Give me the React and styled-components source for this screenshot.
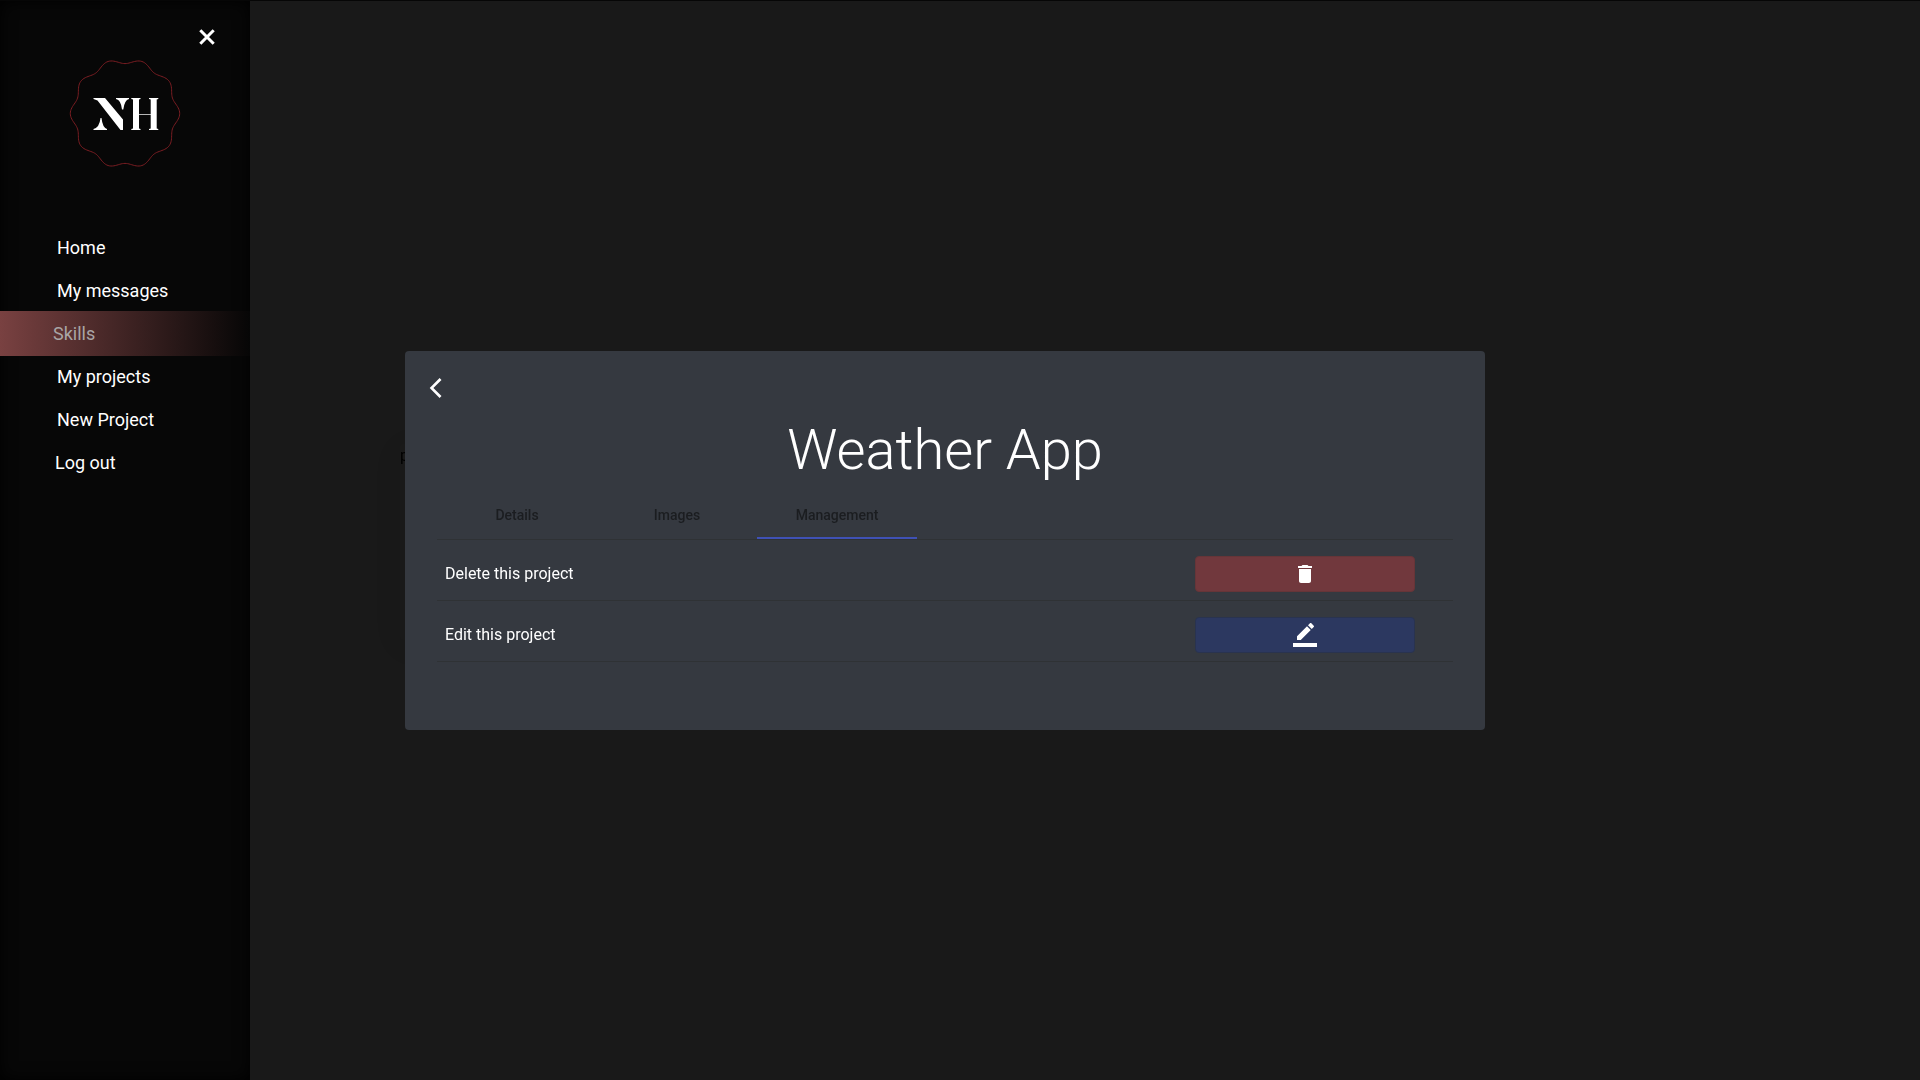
import React from "react";
import styled, { createGlobalStyle } from "styled-components";

const GlobalStyle = createGlobalStyle`
  *, *::before, *::after { box-sizing: border-box; }
  body {
    margin: 0;
    background: #191919;
    color: #fff;
    font-family: Roboto, "Liberation Sans", sans-serif;
    font-size: 16px;
    line-height: 24px;
  }
  button { font: inherit; color: inherit; cursor: pointer; }
`;

const Page = styled.div`
  display: flex;
  min-height: 100vh;
  border-top: 1px solid #060606;
`;

const Sidebar = styled.aside`
  display: flex;
  flex-direction: column;
  width: 250px;
  flex: none;
  background: #070707;
  box-shadow: inset 0 0 16px #000;
`;

const CloseButton = styled.button`
  display: flex;
  align-self: flex-end;
  margin: 24px 31px 0 0;
  padding: 0;
  border: 0;
  background: none;
`;

const LogoLink = styled.a`
  align-self: center;
  display: flex;
  margin: 9px 0 56px;
`;

const Nav = styled.nav`
  display: flex;
  flex-direction: column;
`;

const NavLink = styled.a`
  padding: 0 0 0 ${(p) => p.$indent || 57}px;
  height: 43px;
  font-size: 18px;
  line-height: 43px;
  text-decoration: none;
  color: #fff;
  ${(p) =>
    p.$active &&
    `
    height: 45px;
    line-height: 45px;
    margin: -1px 0;
    color: #a9a5a5;
    background: linear-gradient(to right, #794141, #060606);
  `}
`;

const Main = styled.main`
  flex: 1;
  min-width: 0;
`;

const Overlay = styled.div`
  position: fixed;
  inset: 0;
  display: flex;
  align-items: center;
  justify-content: center;
  padding: 1px 30px 0 0;
  pointer-events: none;
`;

const Dialog = styled.section`
  position: relative;
  width: 100%;
  max-width: 1080px;
  padding: 25px 32px 68px;
  border-radius: 4px;
  background: #353940;
  pointer-events: auto;
`;

const Behind = styled.div`
  position: absolute;
  z-index: -1;
  left: -5px;
  top: 93px;
  width: 240px;
  height: 196px;
  border-radius: 4px;
  color: #000;
  box-shadow: 0 5px 32px rgba(0, 0, 0, 0.06);
`;

const BackButton = styled.button`
  display: flex;
  margin-left: -13px;
  padding: 0;
  border: 0;
  background: none;
`;

const Title = styled.h1`
  margin: 18px 0 8px;
  font-size: 56px;
  line-height: 64px;
  font-weight: 300;
  text-align: center;
`;

const Tabs = styled.div`
  display: flex;
  border-bottom: 1px solid #2f3235;
`;

const Tab = styled.button`
  width: 160px;
  height: 49px;
  padding: 3px 0 0;
  border: 0;
  border-bottom: 2px solid ${(p) => (p.$active ? "#3f51b5" : "transparent")};
  background: none;
  color: #1b1d20;
  font-size: 14px;
  font-weight: 500;
`;

const Row = styled.div`
  display: flex;
  align-items: center;
  justify-content: space-between;
  height: 61px;
  padding: 8px 38px 0 8px;
  border-bottom: 1px solid #2f3235;
`;

const ActionButton = styled.button`
  display: flex;
  align-items: center;
  justify-content: center;
  width: 220px;
  height: 36px;
  padding: 0;
  border: 1px solid ${(p) => (p.$danger ? "#663538" : "#29334f")};
  border-radius: 4px;
  background: ${(p) => (p.$danger ? "#71383d" : "#2c3860")};
`;

const Icon = ({ size = 24, children }) => (
  <svg width={size} height={size} viewBox="0 0 24 24" fill="currentColor" aria-hidden="true">
    {children}
  </svg>
);

const links = [
  { label: "Home" },
  { label: "My messages" },
  { label: "Skills", active: true, indent: 53 },
  { label: "My projects" },
  { label: "New Project" },
  { label: "Log out", indent: 55 },
];

const sealPath = () => {
  const points = [];
  for (let i = 0; i < 240; i += 1) {
    const a = (i / 240) * Math.PI * 2;
    const r = 52.3 + 2.4 * Math.cos(10 * a);
    points.push(`${(56 + r * Math.cos(a)).toFixed(2)} ${(55.5 + r * Math.sin(a)).toFixed(2)}`);
  }
  return `M${points.join("L")}Z`;
};

const Logo = () => (
  <svg width="112" height="112" viewBox="0 0 112 112" role="img" aria-label="NH">
    <path d={sealPath()} fill="none" stroke="#7a1d22" />
    <g fill="#fff">
      <path d="M24.500 40H36L54 61.500V72H51.500L28.500 42.500 24.500 41ZM47 40H60V41Q55.500 42 54.300 51.500H53Q52 42 47 41ZM24.500 72V71Q30.500 69.500 31.500 60H32.500Q33.500 69.500 38 71V72Z" />
      <path d="M62.300 40H71.500V41L70 41.500V70.500L71.500 71V72H62.300V71L64 70.500V41.500L62.300 41ZM80 40H89.300V41L87.700 41.500V70.500L89.300 71V72H80V71L81.700 70.500V41.500L80 41Z" />
      <path d="M70 56h12v1H70Z" opacity=".7" />
    </g>
  </svg>
);

export default function App() {
  return (
    <>
      <GlobalStyle />
      <Page>
        <Sidebar>
          <CloseButton aria-label="Close menu">
            <Icon>
              <path
                d="M5.300 5.300 18.700 18.700M18.700 5.300 5.300 18.700"
                fill="none"
                stroke="currentColor"
                strokeWidth="3"
              />
            </Icon>
          </CloseButton>
          <LogoLink href="#home">
            <Logo />
          </LogoLink>
          <Nav>
            {links.map((l) => (
              <NavLink key={l.label} href="#" $active={l.active} $indent={l.indent}>
                {l.label}
              </NavLink>
            ))}
          </Nav>
        </Sidebar>
        <Main />
      </Page>
      <Overlay>
        <Dialog role="dialog" aria-label="Weather App">
          <Behind>p</Behind>
          <BackButton aria-label="Back">
            <Icon>
              <path d="M17.500 3.900 15.600 2 5.700 12l9.900 10 1.900-1.900L9.400 12Z" />
            </Icon>
          </BackButton>
          <Title>Weather App</Title>
          <Tabs role="tablist">
            <Tab role="tab">Details</Tab>
            <Tab role="tab">Images</Tab>
            <Tab role="tab" aria-selected="true" $active>
              Management
            </Tab>
          </Tabs>
          <Row>
            <span>Delete this project</span>
            <ActionButton $danger aria-label="Delete this project">
              <Icon>
                <path d="M6 19c0 1.100.9 2 2 2h8c1.100 0 2-.9 2-2V7H6v12zM19 4h-3.500l-1-1h-5l-1 1H5v2h14V4z" />
              </Icon>
            </ActionButton>
          </Row>
          <Row>
            <span>Edit this project</span>
            <ActionButton aria-label="Edit this project">
              <Icon>
                <path d="M17.750 7 14 3.250l-10 10V17h3.750l10-10zm2.960-2.960c.39-.39.39-1.020 0-1.410L18.370.29a.996.996 0 0 0-1.410 0L15 2.250 18.750 6l1.960-1.960zM0 20h24v4H0z" />
              </Icon>
            </ActionButton>
          </Row>
        </Dialog>
      </Overlay>
    </>
  );
}
